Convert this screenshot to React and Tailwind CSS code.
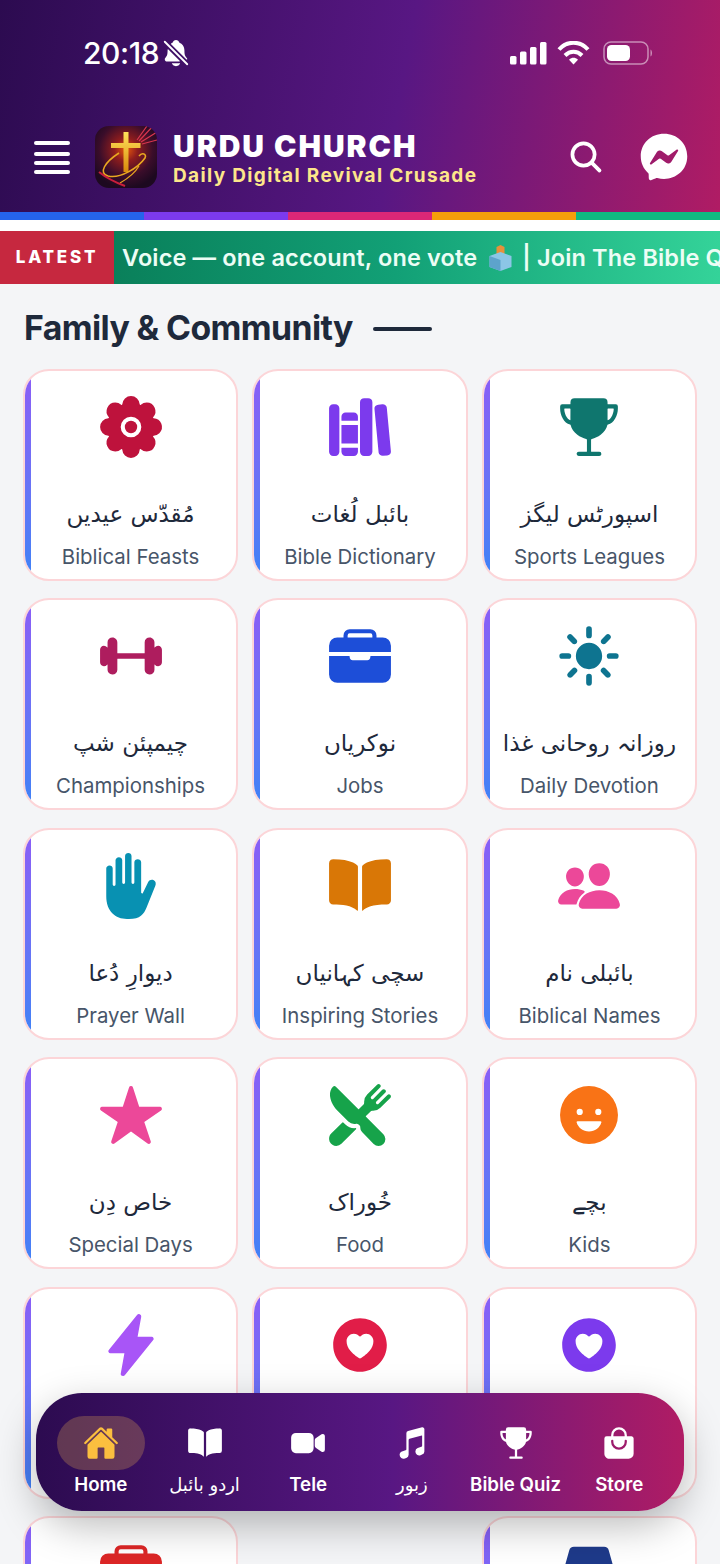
import React from "react";
import {
  IoFlower, IoLibrary, IoTrophy, IoBarbell, IoBriefcase, IoSunny, IoHandLeft, IoBook, IoPeople,
  IoStar, IoRestaurant, IoHappy, IoFlash, IoHeartCircle, IoMedkit, IoSearch, IoHome,
  IoVideocam, IoMusicalNotes, IoBagHandle, IoNotificationsOff,
} from "react-icons/io5";
import { FaFacebookMessenger } from "react-icons/fa";

function Lamp({ size }) {
  return (
    <svg width={size} height={size} viewBox="0 0 70 70" fill="currentColor">
      <path d="M19 6h32q4 0 5 4l10 36H4L14 10q1-4 5-4z" />
    </svg>
  );
}

const cards = [
  { ur: "مُقدّس عیدیں", en: "Biblical Feasts", Icon: IoFlower, c: "text-[#be123c]" },
  { ur: "بائبل لُغات", en: "Bible Dictionary", Icon: IoLibrary, c: "text-[#7c3aed]" },
  { ur: "اسپورٹس لیگز", en: "Sports Leagues", Icon: IoTrophy, c: "text-[#0f766e]" },
  { ur: "چیمپئن شپ", en: "Championships", Icon: IoBarbell, c: "text-[#ae1d5e]" },
  { ur: "نوکریاں", en: "Jobs", Icon: IoBriefcase, c: "text-[#1d4ed8]" },
  { ur: "روزانہ روحانی غذا", en: "Daily Devotion", Icon: IoSunny, c: "text-[#0e7490]" },
  { ur: "دیوارِ دُعا", en: "Prayer Wall", Icon: IoHandLeft, c: "text-[#0891b2]" },
  { ur: "سچی کہانیاں", en: "Inspiring Stories", Icon: IoBook, c: "text-[#d97706]" },
  { ur: "بائبلی نام", en: "Biblical Names", Icon: IoPeople, c: "text-[#ec4899]" },
  { ur: "خاص دِن", en: "Special Days", Icon: IoStar, c: "text-[#ec4899]" },
  { ur: "خُوراک", en: "Food", Icon: IoRestaurant, c: "text-[#16a34a]" },
  { ur: "بچے", en: "Kids", Icon: IoHappy, c: "text-[#f97316]" },
  { Icon: IoFlash, c: "text-[#a855f7]" },
  { Icon: IoHeartCircle, c: "text-[#e11d48]" },
  { Icon: IoHeartCircle, c: "text-[#7c3aed]" },
  { Icon: IoMedkit, c: "text-[#dc2626]" },
  null,
  { Icon: Lamp, c: "text-[#1e3a8a]" },
];

function Logo() {
  return (
    <svg width="62" height="62" viewBox="0 0 62 62" className="rounded-[14px] shrink-0">
      <defs>
        <radialGradient id="lg" cx="50%" cy="38%" r="62%">
          <stop offset="0" stopColor="#e8590c" />
          <stop offset="0.3" stopColor="#8f1d1d" />
          <stop offset="0.7" stopColor="#3a0d2a" />
          <stop offset="1" stopColor="#1d0920" />
        </radialGradient>
        <linearGradient id="gd" x1="0" y1="0" x2="0" y2="1">
          <stop offset="0" stopColor="#ffe25a" />
          <stop offset="1" stopColor="#d98a0b" />
        </linearGradient>
      </defs>
      <rect width="62" height="62" fill="url(#lg)" />
      <path d="M42 14 52 0M44 15 58 0M46 16 62 6M47 18 62 14" stroke="#d9364f" strokeWidth="1.2" />
      <path d="M28.500 6h5v11h12v5h-12v24h-5V22H16v-5h12.500z" fill="url(#gd)" />
      <path d="M24 27C10 36 3 47 13 50c12 3 30-8 37-18 2-4-3-6-6-2" fill="none" stroke="#e9a820" strokeWidth="1.6" />
      <path d="M25 57c7-4 15-10 19-17" fill="none" stroke="#e9a820" strokeWidth="1.2" />
      <path d="M4 46c10 8 18 11 26 14" fill="none" stroke="#c81e3c" strokeWidth="2" />
    </svg>
  );
}

function Card({ item }) {
  const { Icon } = item;
  return (
    <div className="relative h-[212px] overflow-hidden rounded-[26px] border-2 border-[#fcd5d8] bg-white flex flex-col items-center">
      <span className="absolute inset-y-0 left-0 w-[6px] bg-gradient-to-b from-[#8b5cf6] to-[#3b82f6]" />
      <div className={`mt-[21px] h-[70px] flex items-center justify-center ${item.c}`}>
        <Icon size={66} />
      </div>
      {item.ur && (
        <>
          <div dir="rtl" className="mt-[30px] h-[44px] leading-[44px] text-[23px] text-[#1e293b] font-['DejaVu_Sans',sans-serif] whitespace-nowrap">
            {item.ur}
          </div>
          <div className="mt-[7px] text-[20.400px] leading-[28px] text-[#475569] font-['Inter',sans-serif] whitespace-nowrap">{item.en}</div>
        </>
      )}
    </div>
  );
}

const nav = [
  { l: "Home", Icon: IoHome, active: true },
  { l: "اردو بائبل", Icon: IoBook, ur: true },
  { l: "Tele", Icon: IoVideocam },
  { l: "زبور", Icon: IoMusicalNotes, ur: true },
  { l: "Bible Quiz", Icon: IoTrophy },
  { l: "Store", Icon: IoBagHandle },
];

export default function App() {
  return (
    <div className="relative h-[1564px] w-[720px] overflow-hidden bg-[#f4f5f7] font-['Inter',sans-serif]">
      <header className="h-[212px] bg-[linear-gradient(100deg,#2c0b50_0%,#581783_55%,#b01c64_100%)] text-white flex flex-col">
        <div className="h-[106px] flex items-start justify-between pt-[35px] pl-[83px] pr-[67px]">
          <div className="flex items-center gap-[2px]">
            <span className="text-[30px] leading-[36px] font-medium tracking-[-0.4px]">20:18</span>
            <IoNotificationsOff size={30} />
          </div>
          <div className="flex items-center gap-[10px] h-[36px]">
            <svg width="37" height="24" viewBox="0 0 37 24" fill="white">
              <rect x="0" y="15" width="6.5" height="8.5" rx="1.5" />
              <rect x="10" y="10.5" width="6.5" height="13" rx="1.5" />
              <rect x="20" y="6" width="6.5" height="17.5" rx="1.5" />
              <rect x="30" y="1" width="6.5" height="22.5" rx="1.5" />
            </svg>
            <svg width="33" height="24" viewBox="0 0 33 24" fill="none" stroke="white" strokeWidth="4">
              <path d="M2 8.5C10-.5 23-.5 31 8.500" />
              <path d="M8 14.500c5-5 12-5 17 0" />
              <path d="M16.500 23.500 12 18.700c3-2.500 6-2.500 9 0z" fill="white" stroke="none" />
            </svg>
            <svg width="50" height="24" viewBox="0 0 50 24" className="ml-[3px]">
              <rect x="1" y="1" width="44" height="22" rx="7" fill="none" stroke="#fff" strokeOpacity="0.5" strokeWidth="1.5" />
              <rect x="4" y="4" width="23" height="16" rx="4.500" fill="#fff" />
              <path d="M47.500 8.500c2 1 2 6 0 7z" fill="#fff" fillOpacity="0.5" />
            </svg>
          </div>
        </div>
        <div className="flex items-center pl-[34px] pr-[32px] mt-[20px]">
          <div className="w-[36px] flex flex-col gap-[5px] shrink-0">
            <span className="h-[4px] rounded-full bg-white mb-[2px]" />
            <span className="h-[4px] rounded-full bg-white" />
            <span className="h-[4px] rounded-full bg-white" />
            <span className="h-[4px] rounded-full bg-white" />
          </div>
          <div className="ml-[25px]"><Logo /></div>
          <div className="ml-[16px] flex-1 min-w-0 pt-[2px]">
            <div className="text-[30px] leading-[34px] font-black tracking-[2px] whitespace-nowrap">URDU CHURCH</div>
            <div className="text-[19px] leading-[25px] font-bold tracking-[1.35px] text-[#fde68a] whitespace-nowrap">Daily Digital Revival Crusade</div>
          </div>
          <IoSearch size={38} className="mr-[35px]" />
          <FaFacebookMessenger size={48} />
        </div>
      </header>
      <div className="h-[8px] flex">
        {["bg-[#2563eb]", "bg-[#7c3aed]", "bg-[#db2777]", "bg-[#f59e0b]", "bg-[#10b981]"].map((c) => (
          <span key={c} className={`flex-1 ${c}`} />
        ))}
      </div>
      <div className="h-[11px] bg-white" />
      <div className="h-[53px] flex overflow-hidden bg-[linear-gradient(90deg,#06734f_0%,#12a076_55%,#34d399_100%)]">
        <div className="w-[114px] shrink-0 bg-[#c6283f] flex items-center justify-center text-white text-[17px] font-extrabold tracking-[2.8px]">LATEST</div>
        <div className="pl-[8px] flex items-center whitespace-nowrap text-[23.500px] font-semibold tracking-[0.15px] text-[#ecfdf5]">
          <span>Voice — one account, one vote</span>
          <svg width="27" height="28" viewBox="0 0 26 28" className="ml-[10px] mr-[8px] shrink-0">
            <path d="M13 1l4 2v8H9V3z" fill="#e8913a" />
            <path d="M2 12l11-4 11 4v11l-11 4-11-4z" fill="#8cc6e6" />
            <path d="M13 16 2 12v11l11 4z" fill="#5da3cc" />
          </svg>
          <span>| Join The Bible Quiz</span>
        </div>
      </div>
      <main className="px-[23px]">
        <div className="flex items-center gap-[20px] h-[85px] pt-[4px] pl-[1px]">
          <h2 className="text-[33.800px] font-bold tracking-[-0.6px] text-[#1e293b]">Family &amp; Community</h2>
          <span className="w-[59px] h-[4px] rounded-full bg-[#1e293b]" />
        </div>
        <div className="grid grid-cols-3 gap-x-[14.400px] gap-y-[17.400px]">
          {cards.map((it, i) => (it ? <Card key={i} item={it} /> : <div key={i} />))}
        </div>
      </main>
      <nav className="absolute left-[36px] top-[1393px] w-[648px] h-[118px] rounded-[46px] px-[13px] flex bg-[linear-gradient(90deg,#2c0b50_0%,#581783_55%,#b01c64_100%)] shadow-[0_14px_40px_rgba(0,0,0,0.28)]">
        {nav.map(({ l, Icon, active, ur }) => (
          <div key={l} className="flex-1 flex flex-col items-center pt-[23px]">
            <div className={`w-[88px] h-[54px] rounded-[27px] flex items-center justify-center ${active ? "bg-[#f7bd4f]/25 text-[#fbbf3f]" : "text-white"}`}>
              <Icon size={36} />
            </div>
            {ur ? (
              <span dir="rtl" className="mt-[2px] text-[18px] leading-[26px] text-white whitespace-nowrap font-['DejaVu_Sans',sans-serif]">{l}</span>
            ) : (
              <span className="mt-[2px] text-[18.700px] leading-[26px] font-semibold text-white whitespace-nowrap">{l}</span>
            )}
          </div>
        ))}
      </nav>
    </div>
  );
}
